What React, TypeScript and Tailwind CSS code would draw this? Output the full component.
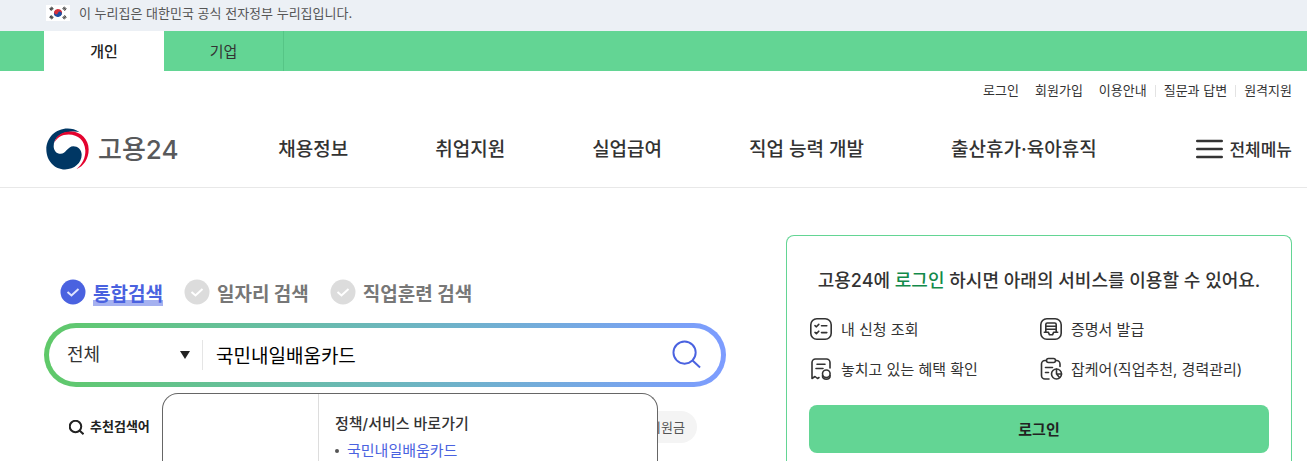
import React from "react";

const navItems = ["채용정보", "취업지원", "실업급여", "직업 능력 개발", "출산휴가·육아휴직"];

const utilityItems = [
  { label: "로그인", divided: false },
  { label: "회원가입", divided: false },
  { label: "이용안내", divided: false },
  { label: "질문과 답변", divided: true },
  { label: "원격지원", divided: true },
];

function FlagIcon() {
  return (
    <svg viewBox="0 0 24 16" className="h-4 w-6" aria-hidden="true">
      <rect width="24" height="16" fill="#fff" />
      <g transform="rotate(20 12 8)">
        <path d="M8 8a4 4 0 0 1 8 0Z" fill="#d6303c" />
        <path d="M8 8a4 4 0 0 0 8 0Z" fill="#1f4fa3" />
        <circle cx="10" cy="8" r="2" fill="#d6303c" />
        <circle cx="14" cy="8" r="2" fill="#1f4fa3" />
      </g>
      <g stroke="#333" strokeWidth="3" strokeDasharray="0.9 0.3">
        <path d="M4.2 4.800 6.800 2.600M17.200 2.600l2.600 2.200M4.200 11.200l2.600 2.200M17.200 13.400l2.600-2.200" />
      </g>
    </svg>
  );
}

function Emblem() {
  return (
    <svg viewBox="47 26 129 125" className="h-[42px] w-[43px]" aria-hidden="true">
      <path
        fill="#003764"
        d="M148 38C136 30 124 27 112 27C76 27 48 55 48 90C48 124 73 150 104 150C132 150 154 130 154 106C154 90 142 80 129 80C112 80 106 103 91 103C79 103 70 93 70 80C70 56 92 38 120 37C130 36 140 36 148 38Z"
      />
      <path
        fill="#e4032e"
        d="M72 70C76 50 94 36 122 36C152 36 175 60 175 90C175 118 160 140 138 149C156 134 166 114 165 92C163 64 144 45 115 45C94 45 79 55 72 70Z"
      />
    </svg>
  );
}

function CheckBadge({ active }: { active: boolean }) {
  return (
    <svg viewBox="0 0 26 26" className="size-[26px]" aria-hidden="true">
      <circle cx="13" cy="13" r="12.5" fill={active ? "#4a62e0" : "#dcdcdc"} />
      <path
        d="M7.500 13 11.500 16.500l7-6.500"
        fill="none"
        stroke={active ? "#dfe4ff" : "#fff"}
        strokeWidth="2"
      />
    </svg>
  );
}

function ServiceIcon({ name }: { name: string }) {
  return (
    <svg
      viewBox="0 0 24 24"
      className="size-6 shrink-0"
      fill="none"
      stroke="#333"
      strokeWidth="1.6"
      strokeLinecap="round"
      strokeLinejoin="round"
      aria-hidden="true"
    >
      {name === "list" && (
        <>
          <rect x="1.800" y="1.800" width="20.400" height="20.400" rx="6" />
          <path d="m6 8.600 1.400 1.200L9.800 7.400M6 15.400l1.400 1.200 2.400-2.400M12.500 8.800h5.300M12.500 15.600h5.300" />
        </>
      )}
      {name === "certificate" && (
        <>
          <rect x="1.800" y="1.800" width="20.400" height="20.400" rx="6" />
          <path d="M6.800 15V7.500A1.500 1.500 0 0 1 8.300 6h7.400a1.500 1.500 0 0 1 1.500 1.500V15M7 9.200h10M7 12.200h10M5.300 15.200h4l1.200 2.600h3l1.200-2.600h4" />
        </>
      )}
      {name === "benefit" && (
        <>
          <path d="M21 11V5.500A3.500 3.500 0 0 0 17.500 2h-11A3.500 3.500 0 0 0 3 5.500V21.500l3-2 2.500 2 1.500-1M8 7.300h8M7 11.500h7" />
          <circle cx="17.300" cy="16.800" r="3.800" />
          <path d="M13.500 18.500c-.6 5 8.200 5 7.600 0" />
        </>
      )}
      {name === "care" && (
        <>
          <path d="M7 3.500H6A3.500 3.500 0 0 0 2.500 7v11.500A3.500 3.500 0 0 0 6 22h4M17 3.500h.5A3.500 3.500 0 0 1 21 7v2.500" />
          <rect x="7.500" y="1.500" width="9" height="4" rx="2" />
          <path d="M6.500 10.500h7M6.500 15.500h3" />
          <circle cx="17.500" cy="17" r="5" />
          <path d="M17.500 12v5h5M17.500 17l3 3.500" />
        </>
      )}
    </svg>
  );
}

function SearchIcon({ className }: { className: string }) {
  return (
    <svg viewBox="0 0 30 30" className={className} fill="none" stroke="currentColor" aria-hidden="true">
      <circle cx="13" cy="13" r="11.500" />
      <path d="m21 21 8 7.500" />
    </svg>
  );
}

const services = [
  { icon: "list", label: "내 신청 조회" },
  { icon: "certificate", label: "증명서 발급" },
  { icon: "benefit", label: "놓치고 있는 혜택 확인" },
  { icon: "care", label: "잡케어(직업추천, 경력관리)" },
];

const searchTabs = ["통합검색", "일자리 검색", "직업훈련 검색"];

export default function App() {
  return (
    <div className="flex min-h-screen flex-col bg-white font-['Inter','Noto_Sans_CJK_KR',sans-serif] text-[#333]">
      <div className="flex h-[31px] items-start gap-[9px] bg-[#ecf0f5] pt-[5px] pl-[46px]">
        <FlagIcon />
        <p className="text-[13px] leading-4 text-[#555]">이 누리집은 대한민국 공식 전자정부 누리집입니다.</p>
      </div>

      <div className="flex h-10 bg-[#63d594] pl-11 text-[15px]">
        <a href="#personal" className="flex w-[120px] items-center justify-center bg-white pt-0.5 font-medium text-[#222]">
          개인
        </a>
        <a href="#company" className="flex w-[120px] items-center justify-center border-r border-[#56c586] pt-0.5">
          기업
        </a>
      </div>

      <header className="border-b border-[#e8e8e8] pr-[15px] pl-[46px]">
        <ul className="flex h-10 items-center justify-end text-[13px]">
          {utilityItems.map((item) => (
            <li key={item.label} className="ml-4 flex items-center">
              {item.divided && <span className="-ml-2 mr-2 h-3 w-px bg-[#e3e3e3]" />}
              <a href="#utility">{item.label}</a>
            </li>
          ))}
        </ul>
        <div className="flex h-[76px] items-start justify-between pt-[17px]">
          <a href="#home" className="flex h-[42px] items-center gap-[9px]">
            <Emblem />
            <span className="pt-0.5 text-[26px] leading-8 font-medium text-[#58595b]">고용24</span>
          </a>
          <nav className="flex h-[42px] items-center gap-[87px] pt-[3px] text-[19px] font-medium">
            {navItems.map((item) => (
              <a key={item} href="#menu">
                {item}
              </a>
            ))}
          </nav>
          <button type="button" className="flex h-[42px] items-center gap-[6px] text-[17px] font-medium">
            <svg viewBox="0 0 27 20" className="h-5 w-[27px]" stroke="#333" strokeWidth="2.400" strokeLinecap="round" aria-hidden="true">
              <path d="M1.200 2h24.600M1.200 10h24.600M1.200 18h24.600" />
            </svg>
            <span className="pt-[3px]">전체메뉴</span>
          </button>
        </div>
      </header>

      <main className="flex flex-1 gap-[60px] pr-[15px] pl-11">
        <section className="flex flex-1 flex-col pt-[91px]">
          <div className="flex h-[26px] gap-[21px] pl-4 text-[19px] leading-7 font-bold">
            {searchTabs.map((tab, i) => (
              <button key={tab} type="button" className="flex items-start gap-[7px]">
                <CheckBadge active={i === 0} />
                <span
                  className={
                    i === 0
                      ? "mt-0.5 h-[25px] bg-linear-to-b from-transparent from-75% to-[#a5b1f0] to-75% text-[#4a62e0]"
                      : "mt-0.5 h-[25px] text-[#777]"
                  }
                >
                  {tab}
                </span>
              </button>
            ))}
          </div>

          <div className="relative mt-[18px]">
            <form className="rounded-full bg-linear-to-r from-[#5fc968] to-[#7d9cff] p-[5px]">
              <div className="flex h-[54px] items-center rounded-full bg-white pr-5 pl-[18px]">
                <div className="relative flex w-[136px] items-center border-r border-[#e5e5e5]">
                  <select
                    aria-label="검색 구분"
                    className="h-[30px] w-full appearance-none bg-transparent pb-0.5 text-[18px]"
                  >
                    <option>전체</option>
                  </select>
                  <svg viewBox="0 0 10 8" className="pointer-events-none absolute right-3 h-2 w-[10px]" aria-hidden="true">
                    <path d="M0 0h10L5 8Z" fill="#222" />
                  </svg>
                </div>
                <input
                  aria-label="검색어"
                  defaultValue="국민내일배움카드"
                  className="h-10 min-w-0 flex-1 bg-transparent pb-0.5 pl-[13px] text-[19px] text-black outline-none"
                />
                <button type="button" aria-label="검색" className="pb-0.5 text-[#4a62e0]">
                  <SearchIcon className="size-[29px] stroke-[2]" />
                </button>
              </div>
            </form>

            <div className="absolute top-[70px] left-[118px] z-10 flex w-[496px] rounded-t-[16px] border border-b-0 border-[#666] bg-white">
              <div className="w-[156px] border-r border-[#ddd]" />
              <div className="px-4 pt-[18px]">
                <h2 className="text-[15px] leading-6 font-medium">정책/서비스 바로가기</h2>
                <ul className="pt-[5px] text-[15px] leading-5">
                  <li className="flex items-center gap-2">
                    <span className="size-1 rounded-full bg-[#555]" />
                    <a href="#card" className="text-[#4a62e0]">
                      국민내일배움카드
                    </a>
                  </li>
                </ul>
              </div>
            </div>
          </div>

          <div className="mt-6 flex h-8 items-center justify-between pr-[29px] pl-[25px]">
            <span className="flex items-center gap-[6px] text-[13px] font-bold text-[#222]">
              <SearchIcon className="size-[15px] stroke-[4]" />
              추천검색어
            </span>
            <a href="#support" className="rounded-full bg-[#f4f4f4] px-3 text-[13px] leading-8 text-[#555]">
              지원금
            </a>
          </div>
        </section>

        <aside className="mt-[47px] w-[506px] rounded-t-lg border border-b-0 border-[#63d594] px-[22px] pt-[31px]">
          <h2 className="text-center text-[18px] leading-7 font-medium whitespace-nowrap">
            고용24에 <strong className="font-medium text-[#128a4a]">로그인</strong> 하시면 아래의 서비스를 이용할 수 있어요.
          </h2>
          <ul className="mt-[22px] grid grid-cols-2 gap-y-[14px] text-[15px] leading-[26px]">
            {services.map((s) => (
              <li key={s.label}>
                <a href="#service" className="flex items-start gap-2 whitespace-nowrap">
                  <ServiceIcon name={s.icon} />
                  {s.label}
                </a>
              </li>
            ))}
          </ul>
          <button type="button" className="mt-[22px] mb-2 h-12 w-full rounded-lg bg-[#63d594] pt-0.5 text-[15px] font-bold text-[#222]">
            로그인
          </button>
        </aside>
      </main>
    </div>
  );
}
